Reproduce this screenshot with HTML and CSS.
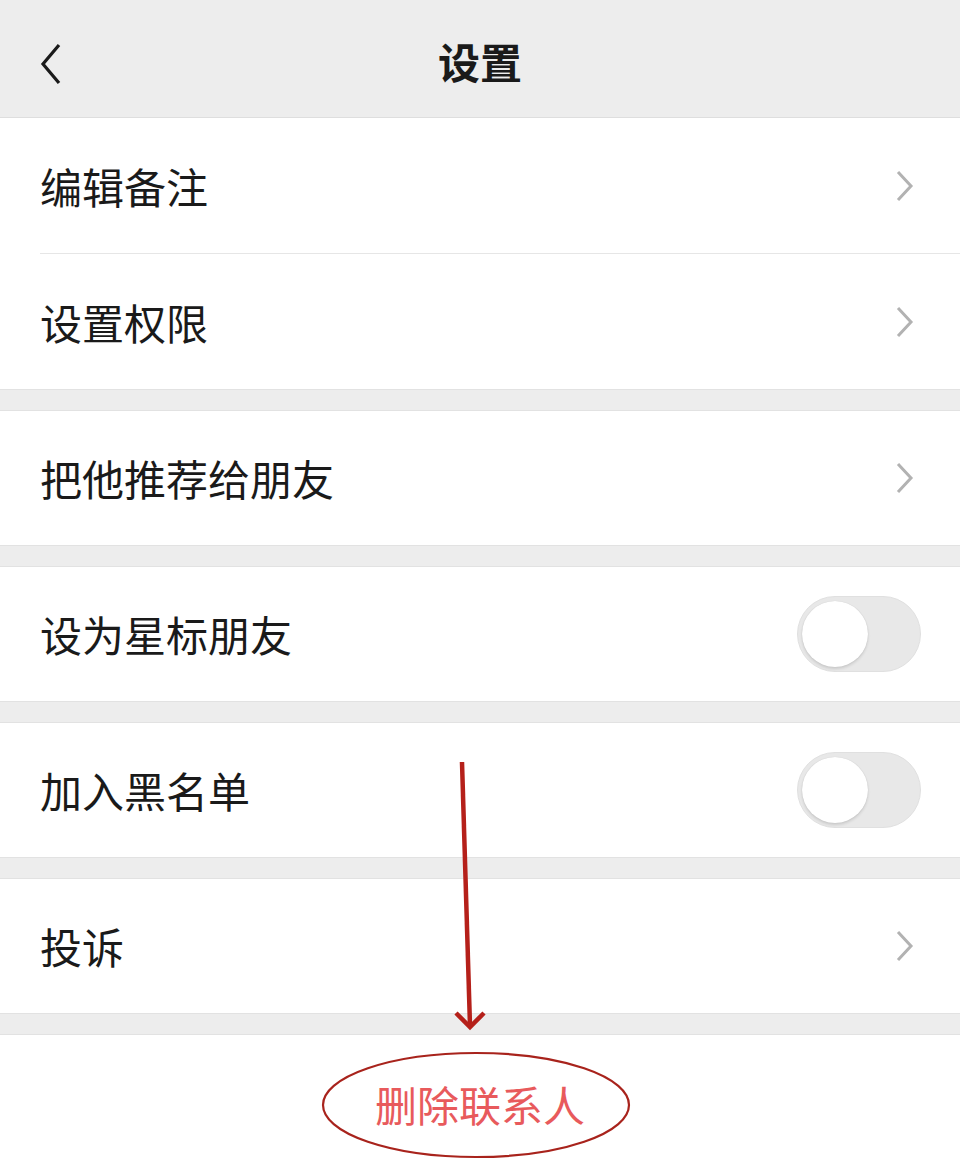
FILE: index.html
```html
<!DOCTYPE html>
<html lang="zh">
<head>
<meta charset="utf-8">
<link rel="stylesheet" href="styles.css">
</head>
<body>
<div class="page">
  <header class="header">
    <svg class="back" width="30" height="44" viewBox="0 0 30 44"><path d="M21 3 L5 22 L21 41" fill="none" stroke="#1a1a1a" stroke-width="3.2" stroke-linejoin="miter"/></svg>
    <h1 class="title">设置</h1>
  </header>

  <section class="group first">
    <div class="row"><span class="label">编辑备注</span><svg class="chev" width="22" height="34" viewBox="0 0 22 34"><path d="M4 3 L17 17 L4 31" fill="none" stroke="#b2b2b2" stroke-width="3"/></svg></div>
    <div class="divider"></div>
    <div class="row"><span class="label">设置权限</span><svg class="chev" width="22" height="34" viewBox="0 0 22 34"><path d="M4 3 L17 17 L4 31" fill="none" stroke="#b2b2b2" stroke-width="3"/></svg></div>
  </section>

  <section class="group">
    <div class="row"><span class="label">把他推荐给朋友</span><svg class="chev" width="22" height="34" viewBox="0 0 22 34"><path d="M4 3 L17 17 L4 31" fill="none" stroke="#b2b2b2" stroke-width="3"/></svg></div>
  </section>

  <section class="group">
    <div class="row"><span class="label">设为星标朋友</span><span class="toggle"><span class="knob"></span></span></div>
  </section>

  <section class="group">
    <div class="row"><span class="label">加入黑名单</span><span class="toggle"><span class="knob"></span></span></div>
  </section>

  <section class="group">
    <div class="row"><span class="label">投诉</span><svg class="chev" width="22" height="34" viewBox="0 0 22 34"><path d="M4 3 L17 17 L4 31" fill="none" stroke="#b2b2b2" stroke-width="3"/></svg></div>
  </section>

  <section class="group delete-group">
    <div class="delete">删除联系人</div>
  </section>

  <svg class="annot" width="960" height="1169" viewBox="0 0 960 1169">
    <line x1="462" y1="762" x2="470" y2="1026" stroke="#b5201a" stroke-width="4.5"/>
    <path d="M456 1013 L470 1027 L484 1013" fill="none" stroke="#b5201a" stroke-width="4.5"/>
    <ellipse cx="476" cy="1105" rx="153" ry="52" fill="none" stroke="#a8231c" stroke-width="2.2"/>
  </svg>
</div>
</body>
</html>
```

FILE: styles.css
```css
* { box-sizing: border-box; }
html, body { margin: 0; padding: 0; }
body {
  background: #ededed;
  font-family: "Noto Sans CJK SC", "Noto Sans", sans-serif;
  color: #1a1a1a;
}
.page {
  position: relative;
  width: 960px;
  height: 1169px;
  overflow: hidden;
  background: #ededed;
}
.header {
  position: relative;
  height: 118px;
  display: flex;
  align-items: center;
  justify-content: center;
  background: #ededed;
  border-bottom: 1px solid #dedede;
}
.back {
  position: absolute;
  left: 38px;
  top: 42px;
}
.title {
  margin: 0;
  font-size: 42px;
  font-weight: 700;
  color: #1a1a1a;
  line-height: 1;
  padding-top: 4px;
}
.group {
  background: #fff;
  border-top: 1px solid #e2e2e2;
  border-bottom: 1px solid #e2e2e2;
  margin-bottom: 20px;
}
.group.first { border-top: none; }
.row {
  height: 134px;
  display: flex;
  align-items: center;
  justify-content: space-between;
  padding: 0 40px;
}
.group.first .row { height: 135px; }
.label {
  font-size: 42px;
  line-height: 1;
  color: #1a1a1a;
}
.chev { margin-right: 4px; }
.divider {
  height: 1px;
  background: #e6e6e6;
  margin-left: 40px;
}
.toggle {
  position: relative;
  width: 124px;
  height: 76px;
  border-radius: 38px;
  background: #e8e8e8;
  border: 1px solid #e0e0e0;
  margin-right: -1px;
}
.knob {
  position: absolute;
  left: 4px;
  top: 4px;
  width: 66px;
  height: 66px;
  border-radius: 50%;
  background: #fff;
  box-shadow: 0 2px 3px rgba(0,0,0,0.12), 0 0 1px rgba(0,0,0,0.15);
}
.delete-group {
  margin-bottom: 0;
  border-bottom: none;
  height: 200px;
}
.delete {
  height: 136px;
  display: flex;
  align-items: center;
  justify-content: center;
  font-size: 42px;
  color: #e85a5c;
}
.annot {
  position: absolute;
  left: 0;
  top: 0;
  pointer-events: none;
}
```
